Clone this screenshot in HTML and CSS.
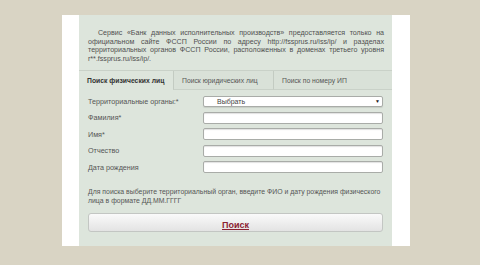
FILE: index.html
```html
<!DOCTYPE html>
<html lang="ru">
    <head>
        <meta charset="UTF-8">
        <title>Банк данных исполнительных производств</title>
        <link rel="stylesheet" href="styles.css">
    </head>
    <body>
        <div class="page">
            <div class="content">
                <p class="intro">Сервис «Банк данных исполнительных производств» предоставляется только на официальном сайте ФССП России по адресу http://fssprus.ru/iss/ip/ и разделах территориальных органов ФССП России, расположенных в доменах третьего уровня r**.fssprus.ru/iss/ip/.</p>

                <ul class="tabs">
                    <li class="tab active">Поиск физических лиц</li>
                    <li class="tab">Поиск юридических лиц</li>
                    <li class="tab">Поиск по номеру ИП</li>
                </ul>

                <form class="search">
                    <div class="row">
                        <label>Территориальные органы:*</label>
                        <div class="select">Выбрать<span class="arrow">▼</span></div>
                    </div>
                    <div class="row">
                        <label>Фамилия*</label>
                        <input type="text" class="field">
                    </div>
                    <div class="row">
                        <label>Имя*</label>
                        <input type="text" class="field">
                    </div>
                    <div class="row">
                        <label>Отчество</label>
                        <input type="text" class="field">
                    </div>
                    <div class="row">
                        <label>Дата рождения</label>
                        <input type="text" class="field">
                    </div>

                    <p class="hint">Для поиска выберите территориальный орган, введите ФИО и дату рождения физического лица в формате ДД.ММ.ГГГГ</p>

                    <div class="btn"><a href="#">Поиск</a></div>
                </form>
            </div>
        </div>
    </body>
</html>
```

FILE: styles.css
```css
body{
    margin: 0;
    height: 265px;
    background-color: #d9d4c4;
    font-family: "Liberation Sans", Arial, sans-serif;
    color: #4a4a4a;
}

ul{
    padding: 0;
    margin: 0;
    list-style: none;
}

.page{
    width: 313px;
    height: 231px;
    margin: 15px 0 0 62px;
    padding: 0 18px 0 17px;
    background-color: #fff;
}

.content{
    height: 100%;
    background-color: #dde5dc;
}

.intro{
    margin: 0;
    padding: 14px 8px 0 9px;
    height: 41px;
    font-size: 7.1px;
    line-height: 8.7px;
    text-align: justify;
    text-indent: 10px;
    color: #505050;
}

/* вкладки */
.tabs{
    display: flex;
    height: 19px;
    border-top: 1px solid #c9d1c8;
}

.tab{
    padding-left: 8px;
    font-size: 6.8px;
    line-height: 19px;
    color: #555;
    border-bottom: 1px solid #c9d1c8;
    background-color: #d9e1d8;
}

.tab:nth-child(1){
    width: 86px;
}

.tab:nth-child(2){
    width: 91px;
    border-left: 1px solid #c3cbc2;
}

.tab:nth-child(3){
    flex: 1;
    border-left: 1px solid #c3cbc2;
}

.tab.active{
    font-weight: bold;
    color: #333;
    border-bottom-color: transparent;
    background-color: #dde5dc;
}

/* форма */
.search{
    padding: 3px 9px 0 9px;
}

.row{
    display: flex;
    align-items: center;
    height: 16.5px;
}

.row label{
    width: 115px;
    font-size: 7.2px;
    color: #555;
}

.field,
.select{
    box-sizing: border-box;
    width: 180px;
    height: 12px;
    margin: 0;
    padding: 0;
    border: 1px solid #a9aca8;
    border-radius: 2px;
    background-color: #fff;
    box-shadow: inset 0 1px 1px rgba(0,0,0,0.12);
}

.select{
    position: relative;
    height: 11px;
    padding-left: 13px;
    font-size: 7px;
    line-height: 9px;
    color: #444;
    box-shadow: 0 1px 1px rgba(0,0,0,0.1);
}

.select .arrow{
    position: absolute;
    top: 0;
    right: 2px;
    font-size: 5px;
    color: #222;
}

.hint{
    margin: 0;
    padding-top: 11px;
    height: 26.5px;
    font-size: 6.9px;
    line-height: 9px;
    color: #555;
}

.btn{
    box-sizing: border-box;
    height: 19px;
    border: 1px solid #c3c6c3;
    border-radius: 3px;
    background: linear-gradient(#fafafa, #e3e3e3);
    text-align: center;
    line-height: 17px;
}

.btn a{
    font-size: 9px;
    font-weight: bold;
    color: #8b2131;
    text-decoration: underline;
}
```
